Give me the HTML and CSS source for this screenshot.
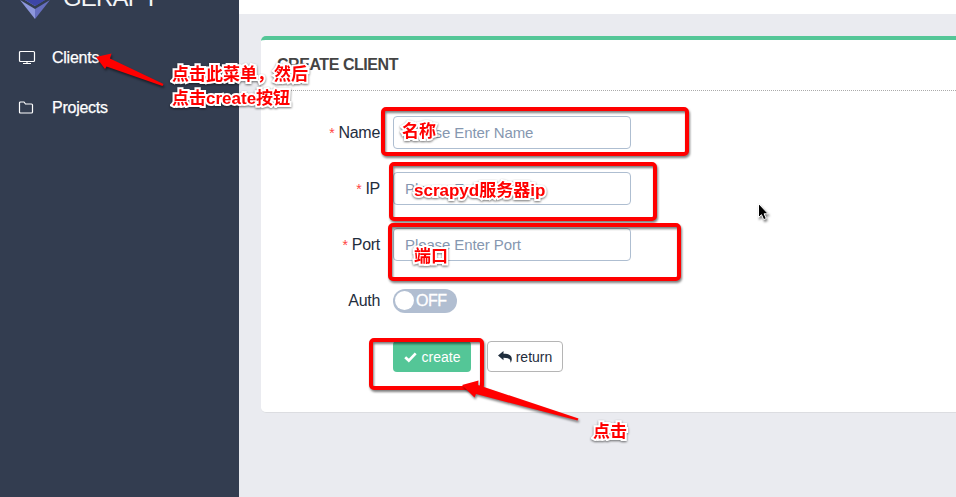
FILE: index.html
```html
<!DOCTYPE html>
<html lang="zh">
<head>
<meta charset="utf-8">
<title>Gerapy</title>
<link rel="stylesheet" href="styles.css">
</head>
<body>
<div class="app">
  <aside class="sidebar">
    <div class="brand">
      <svg class="logo" width="30" height="46" viewBox="0 0 30 46">
        <path fill="#8a94dc" d="M15 0 0 24l15 9z"/><path fill="#5660b4" d="M15 0v33l15-9z"/>
        <path fill="#3d46a8" d="M15 17 0 24l15 9 15-9z"/>
        <path fill="#8d97dc" d="M0 27l15 9v10z"/><path fill="#666fc0" d="M30 27l-15 9v10z"/>
      </svg>
      <span>GERAPY</span>
    </div>
    <nav class="menu">
      <a class="item">
        <svg width="18" height="16" viewBox="0 0 18 16"><rect x="1.500" y="1.500" width="15" height="10" rx="1"/><path d="M5 13.500h8M9 11.500v2"/></svg>
        <span>Clients</span>
      </a>
      <a class="item">
        <svg width="18" height="16" viewBox="0 0 18 16"><path d="M1.500 12V3q0-1 1-1H6l1.500 2h6q1 0 1 1v7q0 1-1 1h-11q-1 0-1-1z"/></svg>
        <span>Projects</span>
      </a>
    </nav>
  </aside>
  <main class="main">
    <header class="topbar"></header>
    <section class="panel">
      <h1 class="title">CREATE CLIENT</h1>
      <form class="form">
        <div class="row"><label><i>*</i> Name</label><input type="text" placeholder="Please Enter Name"></div>
        <div class="row"><label><i>*</i> IP</label><input type="text" placeholder="Please Enter IP"></div>
        <div class="row"><label><i>*</i> Port</label><input type="text" placeholder="Please Enter Port"></div>
        <div class="row auth"><label>Auth</label><span class="switch"><b></b>OFF</span></div>
        <div class="actions">
          <button type="button" class="btn create"><svg width="13" height="12" viewBox="0 0 13 12"><path d="M1.200 6.200 4.800 9.600 11.700 2.400" fill="none" stroke="#fff" stroke-width="2.700"/></svg>create</button>
          <button type="button" class="btn return"><svg width="14" height="12" viewBox="0 0 14 12"><path fill="#1f2d3d" d="M0 4.500 5.500 0v2.700c5.500 0 8.300 1.600 8.300 5.300 0 1.500-.5 2.700-1.300 3.700.2-3.500-1.500-5-7-5v2.500z"/></svg>return</button>
        </div>
      </form>
    </section>
  </main>
</div>

<div class="notes">
  <div class="box box-name"></div>
  <div class="box box-ip"></div>
  <div class="box box-port"></div>
  <div class="box box-create"></div>
  <svg class="arrows" width="956" height="497" viewBox="0 0 956 497">
    <path fill="#f00" d="M96 57 111.500 53.500 110 58.500 163.500 84 162.500 86 106.500 66.500 105 69z"/>
    <path fill="#f00" d="M462 385 478.500 380.500 478 385 578.500 418.500 577.500 420.500 476 394 474.500 397.500z"/>
    <path fill="#000" stroke="#fff" stroke-width="1" d="M758.500 203.500v14l3-2.800 2.200 5 2.600-1.200-2.200-4.700h4.100z"/>
  </svg>
  <p class="note note-menu">点击此菜单，然后<br>点击create按钮</p>
  <p class="note note-name">名称</p>
  <p class="note note-ip">scrapyd服务器ip</p>
  <p class="note note-port">端口</p>
  <p class="note note-click">点击</p>
</div>
</body>
</html>
```
FILE: styles.css
```css
* { box-sizing: border-box; }
body {
  margin: 0;
  height: 497px;
  overflow: hidden;
  font-family: "Liberation Sans", "Noto Sans CJK SC", sans-serif;
  color: #1f2d3d;
}
.app { display: flex; height: 497px; }
.sidebar { flex: 0 0 239px; background: #333d50; color: #fff; overflow: hidden; }
.brand { display: flex; height: 33px; padding-left: 20px; gap: 13px; color: #f4f5f7; }
.logo { margin-top: -27px; flex: none; }
.brand span { font-size: 24px; line-height: 28px; margin-top: -16px; letter-spacing: -0.8px; }
.menu { display: flex; flex-direction: column; }
.item { display: flex; align-items: center; height: 50px; padding-left: 18px; gap: 16px; font-size: 16px; letter-spacing: -.25px; -webkit-text-stroke: .25px #fff; }
.item svg { fill: none; stroke: #fff; stroke-width: 1.200; }
.main { flex: 1; background: #eaebf0; min-width: 0; }
.topbar { height: 14px; background: #fff; }
.panel {
  height: 377px;
  margin: 22px 0 0 22px;
  background: #fff;
  border-top: 4px solid #54c697;
  border-bottom: 1px solid #dcdde1;
  border-radius: 5px 0 0 5px;
}
.title { margin: 0; height: 51px; padding-left: 16px; font-size: 16px; letter-spacing: -.45px; line-height: 49px; color: #444; border-bottom: 1px dotted #aaa; }
.form { padding-top: 25px; }
.row { display: flex; align-items: center; height: 33px; margin-bottom: 23px; }
.row label { width: 119px; margin-right: 13px; text-align: right; font-size: 16px; letter-spacing: -.3px; white-space: nowrap; }
.row i { color: #f44; font-style: normal; font-size: 14px; }
.row input {
  width: 238px;
  height: 33px;
  padding: 0 11px;
  border: 1px solid #aebed1;
  border-radius: 4px;
  font: 15px "Liberation Sans", sans-serif;
  letter-spacing: -.1px;
}
.row input::placeholder { color: #8697b0; opacity: 1; }
.auth { margin-bottom: 24px; }
.switch { display: flex; align-items: center; gap: 2px; width: 64px; height: 24px; padding-left: 2px; border-radius: 12px; background: #b1bed1; color: #fff; font-size: 16px; letter-spacing: -.5px; -webkit-text-stroke: .3px #fff; }
.switch b { width: 19px; height: 19px; border-radius: 50%; background: #fff; }
.actions { display: flex; gap: 16px; padding-left: 132px; }
.btn { display: flex; align-items: center; justify-content: center; height: 31px; padding: 0; font: 14px "Liberation Sans", sans-serif; border-radius: 4px; }
.create { width: 78px; gap: 5px; border: 0; background: #54c697; color: #fff; }
.return { width: 76px; gap: 4px; border: 1px solid #b5b5b5; background: #fff; color: #1f2d3d; }
.notes { position: absolute; inset: 0; overflow: hidden; pointer-events: none; }
.box { position: absolute; border: 4px solid #f00; border-radius: 5px; filter: drop-shadow(1px 2px 1px rgba(0,0,0,.5)); }
.box-name { left: 381px; top: 107px; width: 308px; height: 49px; }
.box-ip { left: 389px; top: 162px; width: 268px; height: 59px; }
.box-port { left: 388px; top: 223px; width: 293px; height: 58px; }
.box-create { left: 369px; top: 338px; width: 115px; height: 52px; }
.arrows { position: absolute; left: 0; top: 0; filter: drop-shadow(1px 2px 1px rgba(0,0,0,.5)); }
.note {
  position: absolute;
  margin: 0;
  color: #f00;
  font-weight: 700;
  font-size: 17px;
  line-height: 24px;
  white-space: nowrap;
  -webkit-text-stroke: 4px #fff;
  paint-order: stroke fill;
  filter: drop-shadow(0 1px 1px rgba(0,0,0,.55));
}
.note-menu { left: 172px; top: 63px; }
.note-name { left: 402px; top: 120px; }
.note-ip { left: 414px; top: 179px; }
.note-port { left: 414px; top: 245px; }
.note-click { left: 593px; top: 420px; }
```
